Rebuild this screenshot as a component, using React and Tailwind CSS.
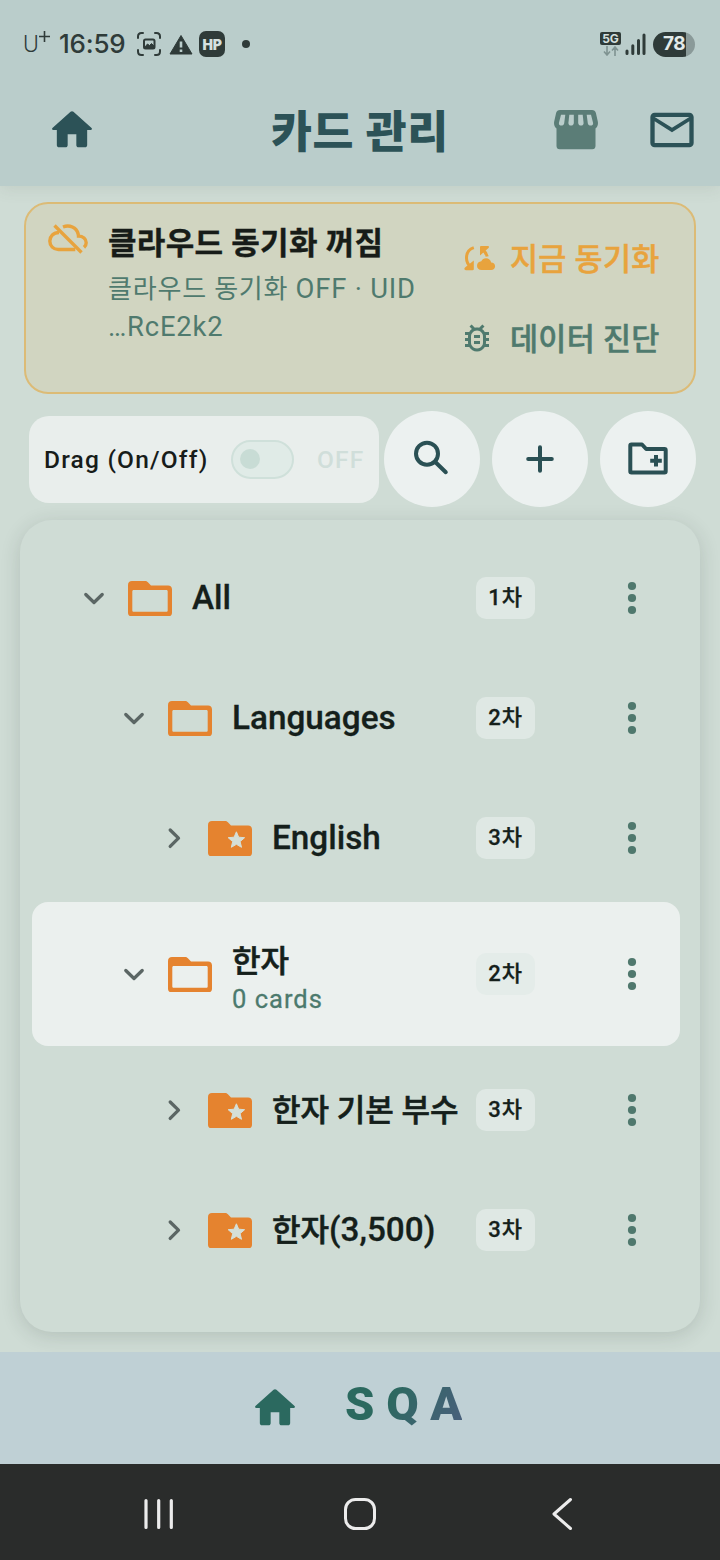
import React, { useState } from "react";
import { MdMailOutline, MdOutlineBugReport } from "react-icons/md";
import clsx from "clsx";

const folders = [
  { id: 1, name: "All", level: 1, open: true },
  { id: 2, name: "Languages", level: 2, open: true },
  { id: 3, name: "English", level: 3, open: false },
  { id: 4, name: "한자", level: 2, open: true, count: 0 },
  { id: 5, name: "한자 기본 부수", level: 3, open: false },
  { id: 6, name: "한자(3,500)", level: 3, open: false },
];

const indent = { 1: "pl-[42px]", 2: "pl-[82px]", 3: "pl-[122px]" };

// Hangul runs a little smaller than Latin so both look the same height
const FolderName = ({ name }) =>
  name.split(/([가-힣 ]+)/).map((part, i) =>
    part ? (
      <span
        key={i}
        className={
          /[가-힣]/.test(part)
            ? "text-[31px] [-webkit-text-stroke:0.6px_currentColor]"
            : "text-[33.3px] [-webkit-text-stroke:0.3px_currentColor]"
        }
      >
        {part}
      </span>
    ) : null
  );

const HomeIcon = ({ className }) => (
  <svg viewBox="0 0 24 24" fill="currentColor" className={className}>
    <path d="M10 19v-5h4v5c0 .55.45 1 1 1h3c.55 0 1-.45 1-1v-7h1.7c.46 0 .68-.57.33-.87L12.67 3.6c-.38-.34-.96-.34-1.34 0l-8.36 7.53c-.34.3-.13.87.33.87H5v7c0 .55.45 1 1 1h3c.55 0 1-.45 1-1z" />
  </svg>
);

const StoreIcon = () => (
  <svg viewBox="0 0 44 40" className="h-10 w-11 text-[#5b7d77]">
    <path
      fill="currentColor"
      d="M6 0h32c2 0 3.4 1.2 3.9 3l1.9 8.5c.6 3-.4 5.5-2.3 7V36c0 2-1.2 3.300-3.2 3.300H5.700c-2 0-3.200-1.300-3.200-3.300V18.500c-1.900-1.500-2.900-4-2.300-7L2.100 3C2.600 1.200 4 0 6 0z"
    />
    <g fill="#bacdcb">
      <path d="M7 4.700h4.300l-1.100 8.500c-.3 3.200-5.800 3.100-5.300-.3z" />
      <path d="M15.300 4.700h4.500V13c0 3.400-5.700 3.400-5.400 0z" />
      <path d="M24.200 4.700h4.500l.9 8.300c.3 3.400-5.400 3.400-5.400 0z" />
      <path d="M32.700 4.700H37l2.100 8.200c.5 3.400-5 3.500-5.300.3z" />
    </g>
  </svg>
);

const CloudOffIcon = () => (
  <svg
    viewBox="0 0 40 30"
    fill="none"
    stroke="#e8a33d"
    strokeWidth="3.4"
    className="mt-[20px] h-[30px] w-10"
  >
    <path d="M6.5 1.5L33.5 28.5" />
    <path d="M11 8.500C5.500 8.500 1.800 12.500 1.800 17c0 5 3.700 8.500 8.500 8.500h17" />
    <path d="M15 3C21.500.3 28.500 3.500 30 9.500c.3 1.300.5 2 .5 2.600 4.500 0 7.700 2.900 7.700 6.600 0 1.700-.6 3.300-2.200 4.700" />
  </svg>
);

const CloudSyncIcon = () => (
  <svg viewBox="0 0 36 36" className="h-9 w-9 overflow-visible">
    <g fill="none" stroke="currentColor" strokeWidth="3">
      <path d="M14.800 7.600C10.500 9 7.500 13 7.500 18c0 3.700 1.600 6.700 4.300 9" />
      <path d="M23.500 9.500c2.600 2.100 4 4.300 4.600 7" />
    </g>
    <path
      fill="currentColor"
      d="M6.300 27.200l8.500-6.700V29c0 .8-.4 1.200-1.200 1.200H7c-1.800 0-2.200-2-.7-3zM21 7.200c0-.8.4-1.200 1.200-1.200h6.600c1.300 0 1.500 1.300.7 2L21 15.600z"
    />
    <path
      fill="currentColor"
      d="M22.500 30c-2.700 0-4.500-1.900-4.500-4.300 0-2.500 1.900-4.300 4.300-4.400.9-2 2.500-3.100 4.700-3.100 2.600 0 4.700 1.800 5.200 4.400 2.300 0 3.900 1.600 3.900 3.700S34.400 30 32.200 30z"
    />
  </svg>
);

const FolderIcon = ({ star }) => (
  <svg viewBox="0 0 44 35.5" className="mt-px h-[35.5px] w-11 shrink-0">
    <path
      fill="#e5832f"
      fillRule="evenodd"
      d={
        "M4 0h13c1.300 0 2 .3 2.900 1.200L23 4.500h17c2.500 0 4 1.500 4 4v23c0 2.500-1.500 4-4 4H4c-2.500 0-4-1.500-4-4V4c0-2.500 1.500-4 4-4z" +
        (star ? "" : "M5.800 9c-1 0-1.500.5-1.500 1.500v18.800c0 1 .5 1.500 1.500 1.500h32.400c1 0 1.500-.5 1.500-1.500V10.500c0-1-.5-1.500-1.500-1.500z")
      }
    />
    {star && (
      <path
        fill="#d5dfd8"
        stroke="#d5dfd8"
        strokeLinejoin="round"
        d="M28.400 10.800l2.300 5.400 5.900.5-4.500 3.900 1.400 5.700-5.100-3-5.100 3 1.400-5.700-4.500-3.900 5.900-.5z"
      />
    )}
  </svg>
);

const Chevron = ({ open }) => (
  <svg
    viewBox="0 0 40 40"
    fill="none"
    stroke="#5b6664"
    strokeWidth="3.3"
    strokeLinecap="round"
    strokeLinejoin="round"
    className="size-10 shrink-0"
  >
    <path d={open ? "M11.8 16.5l8.200 8 8.200-8" : "M16.2 12l8.300 8.200-8.300 8.200"} />
  </svg>
);

const StatusBar = () => (
  <div className="flex h-[88px] items-center justify-between pl-[23px] pr-[25px] text-[#2f3b39]">
    <div className="flex items-center">
      <span className="flex w-[29px] text-[24px] font-light leading-none">
        U
        <svg viewBox="0 0 11 11" stroke="currentColor" strokeWidth="1.6" className="-mt-px size-[11px]">
          <path d="M5.5 0v11M0 5.5h11" />
        </svg>
      </span>
      <span className="ml-[7px] w-[69px] font-[Inter] text-[26px] font-medium leading-none tracking-[-0.2px]">16:59</span>
      <svg viewBox="0 0 24 24" fill="none" stroke="currentColor" strokeWidth="2" strokeLinecap="round" className="ml-[9px] size-6">
        <path d="M1 6V4.500C1 2.500 2.500 1 4.500 1H6M18 1h1.500c2 0 3.500 1.500 3.500 3.500V6M23 18v1.500c0 2-1.500 3.500-3.500 3.500H18M6 23H4.500C2.500 23 1 21.500 1 19.500V18" />
        <rect x="7" y="7.5" width="10.5" height="9" rx="1.5" />
        <path d="M8 15l2.500-3 2 1.500 2-2 2.500 2.500v2H8z" fill="currentColor" strokeWidth="1" />
      </svg>
      <svg viewBox="0 0 24 21" className="ml-2 h-[21px] w-6">
        <path d="M12 1.500L23 20H1z" fill="currentColor" stroke="currentColor" strokeLinejoin="round" />
        <path d="M12 7.500v6M12 15.500v2.500" stroke="#bacdcb" strokeWidth="2.6" />
      </svg>
      <span className="ml-1.5 flex size-[26px] items-center justify-center rounded-[7px] bg-[#2f3b39] font-[Inter] text-[14px] font-black tracking-[-0.3px] text-[#d5e0df]">
        HP
      </span>
      <span className="ml-[17px] size-2 rounded-full bg-[#2f3b39]" />
    </div>
    <div className="flex items-center">
      <div className="flex w-[21px] flex-col items-center gap-px">
        <span className="flex h-[13px] w-[21px] items-center justify-center rounded-[2px] bg-[#2f3b39] font-[Inter] text-[12px] font-bold text-[#d5e0df]">
          5G
        </span>
        <svg viewBox="0 0 16 10" fill="none" stroke="#7f9391" strokeWidth="1.6" className="h-2.5 w-4">
          <path d="M4 0v9M1 5.500L4 9l3-3.500M12 10V1M9 4.500L12 1l3 3.500" />
        </svg>
      </div>
      <svg viewBox="0 0 21 23" stroke="currentColor" strokeWidth="3" strokeLinecap="round" className="ml-1 h-[23px] w-[21px]">
        <path d="M2 18v2.500M7.800 12.800v7.700M13.500 7.500v13M19 2v18.500" />
      </svg>
      <span className="ml-[7px] flex h-[25px] w-[42px] items-center justify-center rounded-full bg-[linear-gradient(90deg,#2f3b39_78%,#8a9a99_78%)] font-[Inter] text-[19px] font-bold tracking-[-0.5px] text-[#e3ebea]">
        78
      </span>
    </div>
  </div>
);

function FolderRow({ folder }) {
  const selected = folder.count !== undefined;
  return (
    <div
      className={clsx(
        "flex items-center rounded-2xl",
        indent[folder.level],
        selected ? "my-1 h-36 bg-[#ebf0ee]" : "h-[120px]"
      )}
    >
      <Chevron open={folder.open} />
      <div className="ml-3.5 flex shrink-0">
        <FolderIcon star={folder.level === 3} />
      </div>
      <div className={clsx("ml-5 min-w-0 flex-1 whitespace-nowrap", selected && "pt-3")}>
        <div className="h-[38px] text-[32px] font-medium leading-[38px] text-[#151f1b]">
          <FolderName name={folder.name} />
        </div>
        {selected && (
          <div className="text-[25.5px] leading-[38px] tracking-[1px] text-[#4c7a6d] [-webkit-text-stroke:0.3px_currentColor]">
            {folder.count} cards
          </div>
        )}
      </div>
      <span
        className={clsx(
          "flex h-[42px] w-[59px] shrink-0 items-center justify-center rounded-[10px] pb-0.5 text-[22px] font-medium tracking-[0.8px] text-[#151f1b] [-webkit-text-stroke:0.3px_currentColor]",
          selected ? "bg-[#e4ece9]" : "bg-[#dfe8e4]"
        )}
      >
        {folder.level}차
      </span>
      <svg viewBox="0 0 48 48" fill="#4f786d" className="ml-[73px] mr-6 size-12 shrink-0">
        <circle cx="24" cy="12" r="4.1" />
        <circle cx="24" cy="24" r="4.1" />
        <circle cx="24" cy="36" r="4.1" />
      </svg>
    </div>
  );
}

const RoundButton = ({ children }) => (
  <button className="flex size-24 shrink-0 items-center justify-center rounded-full bg-[#ecf1f0]">
    <svg
      viewBox="0 0 48 48"
      fill="none"
      stroke="#2a5054"
      strokeWidth="4"
      strokeLinecap="round"
      strokeLinejoin="round"
      className="size-12"
    >
      {children}
    </svg>
  </button>
);

export default function App() {
  const [drag, setDrag] = useState(false);

  return (
    <div className="flex h-[1560px] w-[720px] flex-col overflow-hidden bg-[#cfdcd5] font-[Roboto,'Noto_Sans_CJK_KR',sans-serif]">
      {/* Header */}
      <header className="relative h-[186px] bg-[#bacdcb] shadow-[0_2px_16px_rgba(80,90,70,0.12)]">
        <StatusBar />
        <div className="flex h-[84px] items-center pl-[46px] pr-[22px] text-[#2c5257]">
          <HomeIcon className="size-[52px]" />
          <h1 className="ml-[173px] w-[178px] whitespace-nowrap pt-1.5 text-[44.5px] font-black leading-none tracking-[0.6px]">
            카드 관리
          </h1>
          <div className="ml-[105px]">
            <StoreIcon />
          </div>
          <MdMailOutline className="ml-auto size-[52px] shrink-0" />
        </div>
      </header>

      {/* Cloud sync card */}
      <section className="mx-6 mt-4 flex h-48 shrink-0 rounded-[24px] border-2 border-[#dcbb76] bg-[#d1d5c1] pl-[22px]">
        <CloudOffIcon />
        <div className="ml-5 mt-[21px] w-[331px]">
          <h2 className="whitespace-nowrap text-[31px] font-bold leading-[38px] tracking-[0.3px] text-[#171c18] [-webkit-text-stroke:0.4px_currentColor]">
            클라우드 동기화 꺼짐
          </h2>
          <p className="mt-[7px] text-[26px] leading-[38px] tracking-[0.8px] text-[#4f7a6e]">
            클라우드 동기화 <span className="text-[27.4px]">OFF · UID</span>
            <br />
            <span className="text-[27.4px]">…RcE2k2</span>
          </p>
        </div>
        <div className="ml-5 mt-[14px] flex flex-col text-[30.5px] font-medium tracking-[0.3px] [-webkit-text-stroke:0.5px_currentColor]">
          <button className="flex h-20 items-center gap-[15px] whitespace-nowrap text-[#e8a33d]">
            <CloudSyncIcon />
            <span className="pt-[3px]">지금 동기화</span>
          </button>
          <button className="flex h-20 items-center gap-[15px] whitespace-nowrap text-[#4f7a6e]">
            <MdOutlineBugReport className="size-9" />
            <span className="pt-[3px]">데이터 진단</span>
          </button>
        </div>
      </section>

      {/* Toolbar */}
      <div className="mt-[17px] flex items-center pl-[29px] pr-6">
        <div className="mr-[5px] flex h-[87px] w-[350px] items-center rounded-[20px] bg-[#e9eeec] pl-[15px]">
          <span className="w-[187px] whitespace-nowrap pt-0.5 text-[24.5px] font-medium tracking-[1.2px] text-[#171c1a]">
            Drag (On/Off)
          </span>
          <button
            onClick={() => setDrag(!drag)}
            className="flex h-[39px] w-[63px] items-center rounded-full border-2 border-[#cfe0da] bg-[#e0ebe7] pl-[7px]"
          >
            <span className="size-5 rounded-full bg-[#c8dcd5]" />
          </button>
          <span className="ml-[23px] pt-0.5 text-[24.5px] font-medium tracking-[1.2px] text-[#d0deda]">{drag ? "ON" : "OFF"}</span>
        </div>
        <div className="flex gap-3">
          <RoundButton>
            <circle cx="19" cy="18.7" r="11" />
            <path d="M27.800 27.500l10 9.700" />
          </RoundButton>
          <RoundButton>
            <path d="M24 12.200v23.600M12.200 24h23.600" />
          </RoundButton>
          <RoundButton>
            <path d="M7.500 9.500h10.500l4.200 4.500H40.500c.8 0 1.200.4 1.200 1.200v21.100c0 .8-.4 1.200-1.200 1.200H7.500c-.8 0-1.200-.4-1.200-1.200V10.700c0-.8.4-1.200 1.200-1.200z" />
            <path d="M32 20v11.500M26.200 25.800h11.600" strokeLinecap="butt" />
          </RoundButton>
        </div>
      </div>

      {/* Folder tree */}
      <main className="mx-5 mt-[13px] h-[812px] shrink-0 rounded-[32px] bg-[#cfdcd5] pb-[42px] pl-3 pr-5 pt-[18px] shadow-[0_4px_20px_rgba(40,50,45,0.16)]">
        {folders.map((folder) => (
          <FolderRow key={folder.id} folder={folder} />
        ))}
      </main>

      {/* Bottom bar */}
      <footer className="relative mt-5 flex h-28 shrink-0 items-center bg-[#bfd0d5] pl-[249px]">
        <HomeIcon className="size-[52px] text-[#2b695f]" />
        <span className="-mt-2.5 ml-[44px] bg-[linear-gradient(120deg,#2b695f_35%,#4a5f7c)] bg-clip-text text-[47px] font-black leading-none text-transparent">
          S Q A
        </span>
      </footer>

      {/* Android navigation */}
      <nav className="flex h-24 shrink-0 items-center justify-between bg-[#2a2c2b] px-[142px] pt-1">
        <svg viewBox="0 0 34 34" stroke="#ececec" strokeWidth="3.2" strokeLinecap="round" className="size-[34px]">
          <path d="M4 3.500v27M16.700 3.500v27M29.300 3.500v27" />
        </svg>
        <svg viewBox="0 0 34 34" fill="none" stroke="#ececec" strokeWidth="3" className="size-[34px]">
          <rect x="2.5" y="2.5" width="29" height="29" rx="10" />
        </svg>
        <svg viewBox="0 0 34 34" fill="none" stroke="#ececec" strokeWidth="3" strokeLinecap="round" strokeLinejoin="round" className="size-[34px]">
          <path d="M26.500 2.500L10 17l16.500 14.500" />
        </svg>
      </nav>
    </div>
  );
}
